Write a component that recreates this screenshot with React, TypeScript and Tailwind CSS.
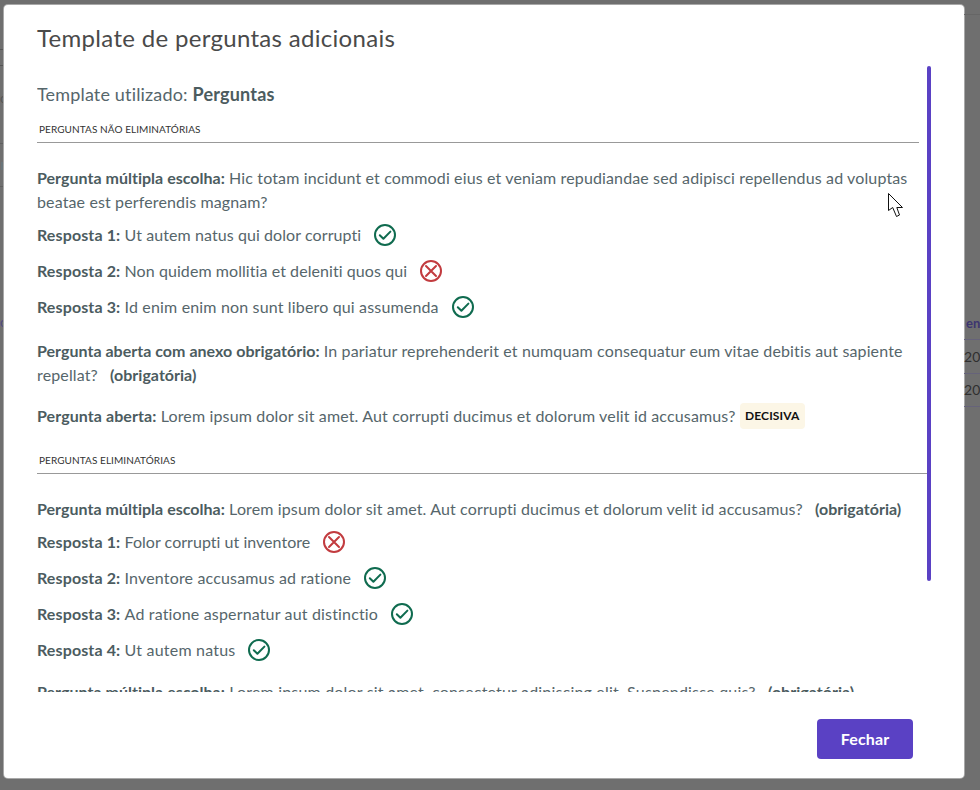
import React from "react";

const Check = () => (
  <svg width="22" height="22" viewBox="0 0 22 22" fill="none" className="shrink-0" stroke="#0f6b4f" strokeWidth="2">
    <circle cx="11" cy="11" r="10" />
    <path d="M5.8 11.2l3.6 3.6 7-7.2" strokeLinecap="round" strokeLinejoin="round" />
  </svg>
);
const Cross = () => (
  <svg width="22" height="22" viewBox="0 0 22 22" fill="none" className="shrink-0" stroke="#c23b3f" strokeWidth="2">
    <circle cx="11" cy="11" r="10" />
    <path d="M6 6l10 10M16 6L6 16" strokeLinecap="round" />
  </svg>
);

const B = ({ children, track = "tracking-[0.02px]" }: { children: React.ReactNode; track?: string }) => (
  <b className={`font-bold text-[#4c5c5f] ${track}`}>{children}</b>
);

const Answer = ({ n, text, ok, track }: { n: number; text: string; ok: boolean; track: string }) => (
  <div className="flex items-center h-9 gap-[13px]">
    <span>
      <B track="tracking-[0.12px]">Resposta {n}:</B> <span className={track}>{text}</span>
    </span>
    {ok ? <Check /> : <Cross />}
  </div>
);

const Section = ({ title, width }: { title: string; width: string }) => (
  <div className={`h-[28px] pl-0.5 pt-[7px] text-[10px] leading-[14px] tracking-[0.08px] text-[#333] border-b border-[#999] ${width}`}>{title}</div>
);

const Req = () => <span className="ml-2"><B>(obrigatória)</B></span>;

export default function App() {
  return (
    <div className="relative flex h-[790px] w-[980px] overflow-hidden bg-[#6f6f6f] font-['Lato','Liberation_Sans',sans-serif] text-[16px] leading-6 tracking-[0.13px] text-[#56666b]">
      {/* sliver of the page behind the modal, left side */}
      <div className="flex w-1 shrink-0 flex-col overflow-hidden">
        <div className="h-[50px] border-b border-[#555]" />
        <div className="h-4 border-b border-[#555]" />
        <div className="h-[78px] border-b border-[#5f5f5f] text-[13px] leading-[64px] text-[#555]">o</div>
        <div className="h-[43px] border-b border-[#5f5f5f] pt-[18px]">
          <div className="ml-px h-2 bg-[#69757a]" />
        </div>
        <div className="h-[140px] text-[#4f4a80] text-[13px] leading-[270px]">o</div>
      </div>

      <div className="mt-[5px] flex h-[773px] w-[960px] shrink-0 flex-col rounded bg-white ring-1 ring-[#a8a8a8]">
        <h1 className="ml-[33px] mt-[17px] h-[44px] text-[24px] leading-8 tracking-[0.31px] text-[#4a4a4a]">Template de perguntas adicionais</h1>
        <div className="relative ml-[33px] h-[626px] w-[894px] overflow-hidden">
          <div className="absolute right-0 top-0 h-[515px] w-1 rounded-full bg-[#5a41c4]" />
          <div className="pt-4 text-[18px] leading-6 tracking-[0.16px]">Template utilizado: <b className="font-bold tracking-[0.2px] text-[#4c5c5f]">Perguntas</b></div>
          <div className="mt-[9px]"><Section width="w-[882px]" title="PERGUNTAS NÃO ELIMINATÓRIAS" /></div>
          <p className="mt-[23px] w-[878px]"><B>Pergunta múltipla escolha:</B> Hic totam incidunt et commodi eius et veniam repudiandae sed adipisci repellendus ad voluptas beatae est perferendis magnam?</p>
          <div className="mt-[3px]">
            <Answer n={1} track="tracking-[0.08px]" text="Ut autem natus qui dolor corrupti" ok />
            <Answer n={2} track="tracking-[0.07px]" text="Non quidem mollitia et deleniti quos qui" ok={false} />
            <Answer n={3} track="tracking-[0.16px]" text="Id enim enim non sunt libero qui assumenda" ok />
          </div>
          <p className="mt-[14px] w-[878px]"><B>Pergunta aberta com anexo obrigatório:</B> In pariatur reprehenderit et numquam consequatur eum vitae debitis aut sapiente repellat? <Req /></p>
          <div className="mt-4 flex items-center gap-1">
            <span className="tracking-[0.145px]"><B track="tracking-[0.08px]">Pergunta aberta:</B> Lorem ipsum dolor sit amet. Aut corrupti ducimus et dolorum velit id accusamus?</span>
            <span className="rounded-sm bg-[#fcf6e6] px-[5.5px] text-[12px] leading-[26px] tracking-[0.1px] font-bold text-[#111]">DECISIVA</span>
          </div>
          <div className="mt-[17px]"><Section width="w-[890px]" title="PERGUNTAS ELIMINATÓRIAS" /></div>
          <p className="mt-[23px]"><B>Pergunta múltipla escolha:</B> Lorem ipsum dolor sit amet. Aut corrupti ducimus et dolorum velit id accusamus? <Req /></p>
          <div className="mt-[3px]">
            <Answer n={1} track="tracking-[0.03px]" text="Folor corrupti ut inventore" ok={false} />
            <Answer n={2} track="tracking-[0.16px]" text="Inventore accusamus ad ratione" ok />
            <Answer n={3} track="tracking-[0.16px]" text="Ad ratione aspernatur aut distinctio" ok />
            <Answer n={4} track="tracking-[0.2px]" text="Ut autem natus" ok />
          </div>
          <p className="mt-[12px] whitespace-nowrap tracking-[0.18px]"><B>Pergunta múltipla escolha:</B> Lorem ipsum dolor sit amet, consectetur adipiscing elit. Suspendisse quis? <Req /></p>
        </div>
        <div className="flex flex-1 items-start justify-end pr-[51px] pt-[27px]">
          <button className="h-10 w-24 rounded bg-[#5a41c4] text-[16px] font-bold text-white">Fechar</button>
        </div>
      </div>

      {/* sliver of the page behind the modal, right side */}
      <div className="flex min-w-0 flex-1 flex-col overflow-hidden whitespace-nowrap">
        <div className="h-[15px] border-b border-[#666]" />
        <div className="flex h-[325px] items-end border-b border-[#66637a] pb-[6px] pl-0.5 text-[13px] leading-5 font-bold text-[#3d3570]">en</div>
        <div className="flex h-[34px] items-center border-b border-[#66637a] text-[14px] text-[#2f2f2f]">20</div>
        <div className="flex h-[33px] items-center border-b border-[#66637a] text-[14px] text-[#2f2f2f]">20</div>
      </div>

      <svg className="absolute left-[888px] top-[193px]" width="16" height="25" viewBox="0 0 16 25">
        <path d="M0.5 0.5V17.5L4.7 14.5L8.5 23.5L11.5 22L8.8 14.5H14.5Z" fill="#fff" stroke="#111" strokeWidth="1" />
      </svg>
    </div>
  );
}
